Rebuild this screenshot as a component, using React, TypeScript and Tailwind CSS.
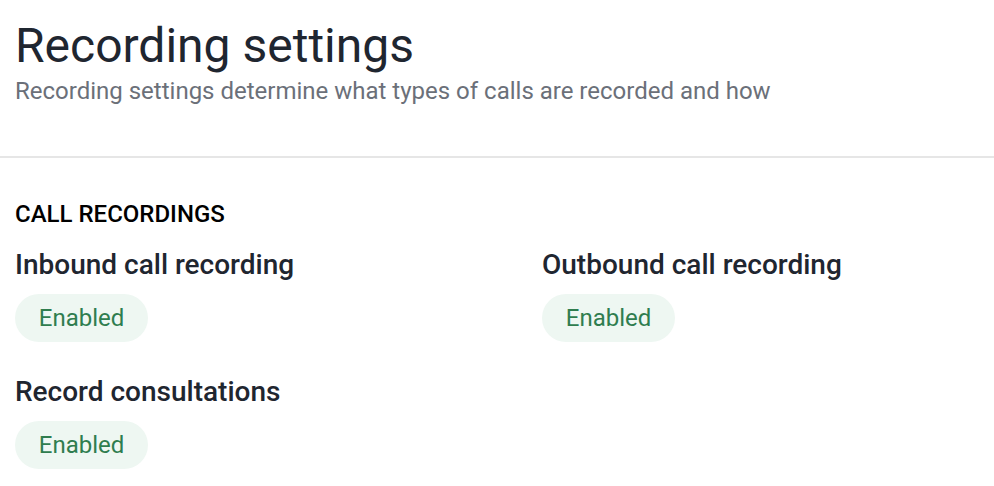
import React from "react";

const Pill = () => (
  <div className="inline-flex h-[48px] w-[133px] items-center justify-center rounded-full bg-[#eef7f2] text-[24px] text-[#2f7d4f]">
    Enabled
  </div>
);

const Item = ({ label }: { label: string }) => (
  <div className="flex flex-col items-start">
    <div className="text-[28px] font-medium leading-[32px] text-[#1f2630]">{label}</div>
    <div className="mt-[13px]">
      <Pill />
    </div>
  </div>
);

export default function App() {
  return (
    <div className="h-[486px] w-[994px] overflow-hidden bg-white" style={{ fontFamily: "Roboto, sans-serif" }}>
      <div className="px-[15px] pt-[18px]">
        <h1 className="text-[48px] font-normal leading-[56px] text-[#1f2630]">Recording settings</h1>
        <p className="mt-[3px] text-[24px] leading-[28px] text-[#6b7079]">
          Recording settings determine what types of calls are recorded and how
        </p>
      </div>
      <div className="mt-[51px] h-[2px] w-full bg-[#e6e6e6]" />
      <div className="px-[15px] pt-[42px]">
        <div className="text-[24px] font-medium leading-[28px] text-black">CALL RECORDINGS</div>
        <div className="mt-[21px] grid grid-cols-[527px_1fr] gap-y-[34px]">
          <Item label="Inbound call recording" />
          <Item label="Outbound call recording" />
          <Item label="Record consultations" />
        </div>
      </div>
    </div>
  );
}
